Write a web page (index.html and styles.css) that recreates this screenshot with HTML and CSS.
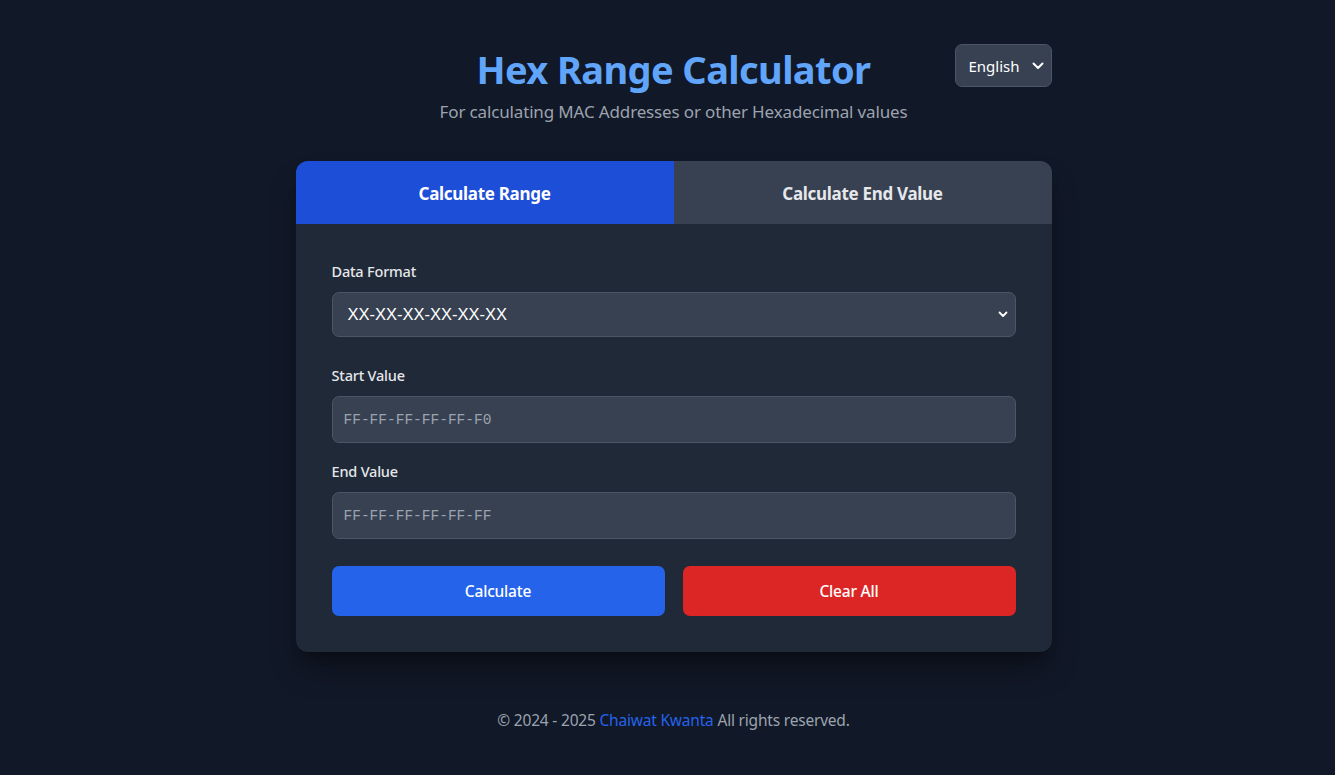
FILE: index.html
```html
<!DOCTYPE html>
<html lang="en">
<head>
<meta charset="utf-8">
<title>Hex Range Calculator</title>
<link rel="stylesheet" href="styles.css">
</head>
<body>
<div class="page">
  <header class="header">
    <h1 class="title">Hex Range Calculator</h1>
    <p class="subtitle">For calculating MAC Addresses or other Hexadecimal values</p>
    <div class="lang">
      <span>English</span>
      <svg class="chev" width="12" height="8" viewBox="0 0 12 8"><path d="M1.5 1.5 6 6l4.5-4.5" fill="none" stroke="#fff" stroke-width="2" stroke-linecap="round" stroke-linejoin="round"/></svg>
    </div>
  </header>

  <main class="card">
    <div class="tabs">
      <div class="tab active">Calculate Range</div>
      <div class="tab">Calculate End Value</div>
    </div>
    <div class="form">
      <div class="field field-format">
        <label class="label">Data Format</label>
        <div class="select">
          <span>XX-XX-XX-XX-XX-XX</span>
          <svg class="chev-sm" width="10" height="7" viewBox="0 0 10 7"><path d="M1.5 1.5 5 5l3.5-3.5" fill="none" stroke="#fff" stroke-width="1.8" stroke-linecap="round" stroke-linejoin="round"/></svg>
        </div>
      </div>
      <div class="field field-start">
        <label class="label">Start Value</label>
        <div class="input">FF-FF-FF-FF-FF-F0</div>
      </div>
      <div class="field field-end">
        <label class="label">End Value</label>
        <div class="input">FF-FF-FF-FF-FF-FF</div>
      </div>
      <div class="buttons">
        <button class="btn btn-blue">Calculate</button>
        <button class="btn btn-red">Clear All</button>
      </div>
    </div>
  </main>

  <footer class="footer">© 2024 - 2025 <a class="link">Chaiwat Kwanta</a> All rights reserved.</footer>
</div>
</body>
</html>
```
FILE: styles.css
```css
* { box-sizing: border-box; }
html, body { margin: 0; padding: 0; }
body {
  background: #111827;
  font-family: "Noto Sans", "Liberation Sans", sans-serif;
  color: #e5e7eb;
  min-height: 775px;
}
.page {
  width: 756px;
  margin: 0 auto;
  position: relative;
  left: 6px;
  padding-top: 44px;
}
.header {
  position: relative;
  text-align: center;
  height: 117px;
}
.title {
  margin: 0;
  font-size: 38px;
  line-height: 50px;
  font-weight: 700;
  color: #60a5fa;
  letter-spacing: -0.6px;
}
.subtitle {
  margin: 6px 0 0;
  font-size: 17px;
  line-height: 24px;
  color: #9ca3af;
  letter-spacing: -0.15px;
}
.lang {
  position: absolute;
  top: 0;
  right: 0;
  width: 97px;
  height: 43px;
  background: #374151;
  border: 1px solid #4b5563;
  border-radius: 7px;
  display: flex;
  align-items: center;
  padding: 0 7px 0 13px;
  justify-content: space-between;
  color: #fff;
  font-size: 15px;
}
.card {
  background: #1f2937;
  border-radius: 12px;
  overflow: hidden;
  box-shadow: 0 20px 30px -5px rgba(0,0,0,0.35), 0 8px 12px -6px rgba(0,0,0,0.3);
}
.tabs {
  display: flex;
  height: 63px;
}
.tab {
  flex: 1;
  display: flex;
  align-items: center;
  justify-content: center;
  padding-top: 2px;
  background: #374151;
  color: #e5e7eb;
  font-weight: 700;
  font-size: 17px;
  letter-spacing: -0.3px;
}
.tab.active {
  background: #1d4ed8;
  color: #fff;
}
.form {
  padding: 37px 36px 36px;
  display: flex;
  flex-direction: column;
}
.field {
  display: flex;
  flex-direction: column;
}
.field-format { margin-bottom: 28px; }
.field-start { margin-bottom: 18px; }
.field-end { margin-bottom: 27px; }
.label {
  font-size: 14.5px;
  font-weight: 500;
  color: #e5e7eb;
  line-height: 20px;
  margin-bottom: 11px;
  letter-spacing: -0.2px;
}
.select {
  height: 45px;
  background: #374151;
  border: 1px solid #4b5563;
  border-radius: 7px;
  display: flex;
  align-items: center;
  justify-content: space-between;
  padding: 0 7px 0 15px;
  color: #fff;
  font-family: "Liberation Sans", sans-serif;
  font-size: 16.5px;
}
.input {
  height: 47px;
  background: #374151;
  border: 1px solid #4b5563;
  border-radius: 7px;
  display: flex;
  align-items: center;
  padding: 0 11px;
  color: #9ca3af;
  font-family: "Liberation Mono", monospace;
  font-size: 14.5px;
}
.buttons {
  display: grid;
  grid-template-columns: 1fr 1fr;
  gap: 18px;
}
.btn {
  height: 50px;
  border: none;
  border-radius: 7px;
  color: #fff;
  font-family: "Noto Sans", "Liberation Sans", sans-serif;
  font-weight: 500;
  font-size: 15.5px;
  letter-spacing: -0.2px;
}
.btn-blue { background: #2563eb; }
.btn-red { background: #dc2626; }
.footer {
  text-align: center;
  margin-top: 57px;
  color: #9ca3af;
  font-size: 15.5px;
  line-height: 22px;
  letter-spacing: -0.2px;
}
.link { color: #2563eb; }
```
